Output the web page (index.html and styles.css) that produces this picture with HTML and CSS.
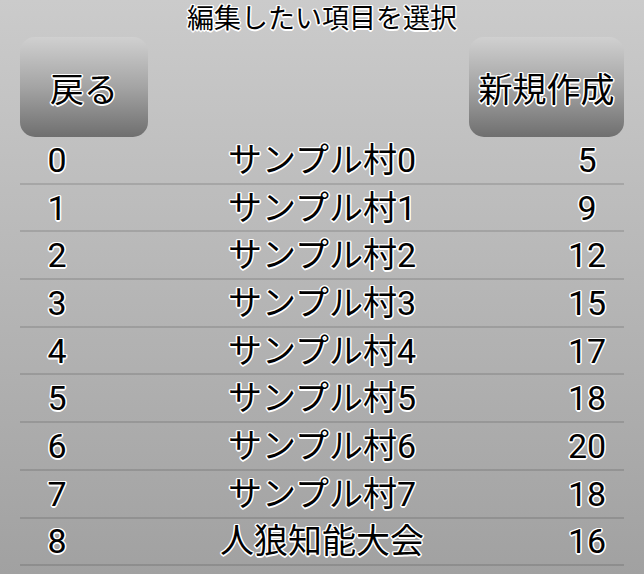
FILE: index.html
```html
<!DOCTYPE html>
<html lang="ja">
<head>
  <meta charset="UTF-8" />
  <meta name="viewport" content="width=device-width, initial-scale=1" />
  <title>村の選択</title>
  <link rel="stylesheet" href="styles.css">
</head>
<body>

  <h1 class="title">編集したい項目を選択</h1>

  <div class="toolbar">
    <button class="btn">戻る</button>
    <button class="btn">新規作成</button>
  </div>

  <ul class="list">
    <li class="row"><span>0</span><span>サンプル村0</span><span>5</span></li>
    <li class="row"><span>1</span><span>サンプル村1</span><span>9</span></li>
    <li class="row"><span>2</span><span>サンプル村2</span><span>12</span></li>
    <li class="row"><span>3</span><span>サンプル村3</span><span>15</span></li>
    <li class="row"><span>4</span><span>サンプル村4</span><span>17</span></li>
    <li class="row"><span>5</span><span>サンプル村5</span><span>18</span></li>
    <li class="row"><span>6</span><span>サンプル村6</span><span>20</span></li>
    <li class="row"><span>7</span><span>サンプル村7</span><span>18</span></li>
    <li class="row"><span>8</span><span>人狼知能大会</span><span>16</span></li>
  </ul>

</body>
</html>
```

FILE: styles.css
```css
/* Page background: light grey fading darker towards the bottom */
body {
  margin: 0;
  height: 574px;
  overflow: hidden;
  background: linear-gradient(#cbcbcb, #a1a1a1);
  font-family: Roboto, "Noto Sans CJK JP", sans-serif;
  color: #000;
}

/* Black text with a thin white outline */
.title,
.btn,
.row {
  text-shadow:
    1px 1px 0 #fff, -1px -1px 0 #fff, 1px -1px 0 #fff, -1px 1px 0 #fff,
    0 1.5px 0 #fff, 0 -1.5px 0 #fff, 1.5px 0 0 #fff, -1.5px 0 0 #fff;
}

.title {
  margin: 0;
  height: 37px;
  line-height: 38px;
  font-size: 27px;
  font-weight: normal;
  text-align: center;
}

/* Back / New buttons */
.toolbar {
  display: flex;
  justify-content: space-between;
  padding: 0 20px;
}

.btn {
  height: 100px;
  padding: 0;
  border: none;
  border-radius: 15px;
  background: linear-gradient(#d0d0d0, #a4a4a4 50%, #6f6f6f);
  font-family: inherit;
  font-size: 34px;
  white-space: nowrap;
  color: #000;
}

.btn:first-child {
  width: 128px;
}

.btn:last-child {
  width: 155px;
}

/* Village list */
.list {
  list-style: none;
  margin: 0 20px;
  padding: 0;
}

.row {
  display: grid;
  grid-template-columns: 74px 1fr 74px;
  align-items: center;
  height: 45.7px;
  border-bottom: 2px solid rgba(0, 0, 0, 0.12);
  font-size: 34px;
  line-height: 1;
  text-align: center;
}
```
